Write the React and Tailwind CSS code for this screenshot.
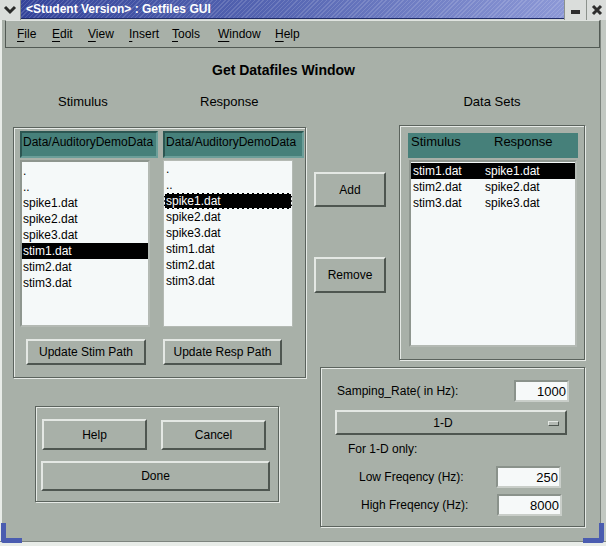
import React from "react";

function Btn({ className = "", children }) {
  return (
    <div
      className={
        "flex items-center justify-center border-2 border-t-[#e4e8e4] border-l-[#e4e8e4] border-b-[#4e5650] border-r-[#4e5650] bg-[#a8b0a8] text-[12px] text-black " +
        className
      }
    >
      {children}
    </div>
  );
}

function Frame({ className = "", children }) {
  return (
    <div
      className={
        "border border-[#5b635d] shadow-[1px_1px_0_#e6eae6,inset_1px_1px_0_#e6eae6] " +
        className
      }
    >
      {children}
    </div>
  );
}

function Input({ className = "", value }) {
  return (
    <div
      className={
        "flex items-center justify-end bg-[#f6f9f9] border-2 border-t-[#8a928b] border-l-[#8a928b] border-b-[#c9cec9] border-r-[#c9cec9] pr-[1px] text-[13px] leading-none " +
        className
      }
    >
      {value}
    </div>
  );
}

function Header({ className = "", children }) {
  return (
    <div
      className={
        "bg-[#46807a] border-2 border-t-[#2c5652] border-l-[#2c5652] border-b-[#6b9e99] border-r-[#6b9e99] text-[12px] text-black leading-[16px] " +
        className
      }
    >
      {children}
    </div>
  );
}

const stimItems = [".", "..", "spike1.dat", "spike2.dat", "spike3.dat", "stim1.dat", "stim2.dat", "stim3.dat"];
const respItems = [".", "..", "spike1.dat", "spike2.dat", "spike3.dat", "stim1.dat", "stim2.dat", "stim3.dat"];

const menus = [
  ["F", "ile", "w-[35px]"],
  ["E", "dit", "w-[36px]"],
  ["V", "iew", "w-[41px]"],
  ["I", "nsert", "w-[43px]"],
  ["T", "ools", "w-[46px]"],
  ["W", "indow", "w-[57px]"],
  ["H", "elp", "w-[40px]"],
];

export default function App() {
  return (
    <div className="relative w-[606px] h-[546px] overflow-hidden bg-[#a8b0a8] font-['Liberation_Sans',Arial,sans-serif] text-black">
      {/* Title bar */}
      <div className="flex h-[20px] bg-[#d4d8d4]">
        <div className="w-[21px] h-[20px] flex items-center justify-center bg-[#dadddb] border-r border-[#8c928d]">
          <svg width="14" height="10" viewBox="0 0 14 10">
            <polyline points="2,2 7,7 12,2" fill="none" stroke="#2a2a2a" strokeWidth="3" />
          </svg>
        </div>
        <div className="flex-1 h-[19px] flex items-center pl-[5px] text-white font-bold text-[12px] leading-none border-b border-[#1e2a66] bg-[image:repeating-linear-gradient(135deg,rgba(255,255,255,0.14)_0px,rgba(255,255,255,0.14)_1px,transparent_1px,transparent_3px),linear-gradient(90deg,#34449a,#5868b4_50%,#8c98d6)]">
          &lt;Student Version&gt; : Getfiles GUI
        </div>
        <div className="w-[22px] h-[20px] flex items-center justify-center bg-[#dadddb] border-l border-[#8c928d]">
          <div className="w-[9px] h-[4px] bg-[#2e2e2e] mt-[4px]" />
        </div>
        <div className="w-[20px] h-[20px] flex items-center justify-center bg-[#dadddb] border-l border-[#8c928d]">
          <svg width="12" height="12" viewBox="0 0 12 12">
            <path d="M2 2 L10 10 M10 2 L2 10" stroke="#2e2e2e" strokeWidth="3" />
          </svg>
        </div>
      </div>

      {/* Menu bar */}
      <div className="ml-[5px] mr-[6px] h-[28px] flex items-center border-l border-r border-b border-[#525a54] border-t border-t-[#dfe3df] pl-[11px] text-[12px]">
        {menus.map(([a, b, w]) => (
          <div key={a + b} className={w}>
            <span className="underline underline-offset-[3px] decoration-1">{a}</span>
            {b}
          </div>
        ))}
      </div>

      {/* Content */}
      <div className="pt-[14px]">
        <div className="ml-[212px] h-[16px] leading-[16px] text-[14px] font-bold">Get Datafiles Window</div>
        <div className="flex items-start">
          {/* Left column */}
          <div className="ml-[13px] w-[293px]">
            <div className="flex h-[16px] mt-[16px] text-[13px] leading-[16px]">
              <span className="ml-[45px] w-[142px]">Stimulus</span>
              <span>Response</span>
            </div>
            <Frame className="mt-[17px] h-[251px]">
              <div className="flex pl-[6px] pt-[3px] gap-[5px]">
                {/* Stimulus column */}
                <div className="flex flex-col">
                  <Header className="w-[138px] h-[27px] pl-[1px] pt-[1px] whitespace-nowrap overflow-hidden">Data/AuditoryDemoData</Header>
                  <div className="mt-[2px] w-[130px] h-[167px] bg-[#f5f9f9] border-2 border-[#8e968f] border-b-[#b4bab4] border-r-[#b4bab4] pt-[1px] text-[12px]">
                    {stimItems.map((it, i) => (
                      <div
                        key={i}
                        className={
                          i === 5
                            ? "h-[16px] leading-[16px] pl-[1px] bg-black text-white"
                            : "h-[16px] leading-[16px] pl-[1px]"
                        }
                      >
                        {it}
                      </div>
                    ))}
                  </div>
                  <Btn className="ml-[6px] mt-[12px] w-[120px] h-[26px]">Update Stim Path</Btn>
                </div>
                {/* Response column */}
                <div className="flex flex-col">
                  <Header className="w-[141px] h-[27px] pl-[1px] pt-[1px] whitespace-nowrap overflow-hidden">Data/AuditoryDemoData</Header>
                  <div className="mt-[2px] w-[130px] h-[167px] bg-[#f5f9f9] border border-[#b4bab4] text-[12px]">
                    {respItems.map((it, i) => (
                      <div
                        key={i}
                        className={
                          i === 2
                            ? "h-[16px] leading-[14px] pl-[1px] bg-black text-white border border-dashed border-[#f5f9f9]"
                            : "h-[16px] leading-[16px] pl-[2px]"
                        }
                      >
                        {it}
                      </div>
                    ))}
                  </div>
                  <Btn className="mt-[12px] w-[119px] h-[26px]">Update Resp Path</Btn>
                </div>
              </div>
            </Frame>
            <Frame className="mt-[28px] ml-[22px] w-[244px] h-[96px]">
              <div className="flex items-start pt-[12px]">
                <Btn className="ml-[6px] w-[105px] h-[31px]">Help</Btn>
                <Btn className="ml-[14px] mt-[1px] w-[105px] h-[30px]">Cancel</Btn>
              </div>
              <Btn className="ml-[5px] mt-[11px] w-[229px] h-[30px]">Done</Btn>
            </Frame>
          </div>

          {/* Right column */}
          <div className="ml-[8px]">
            <div className="flex items-start">
              <div className="w-[72px] flex flex-col">
                <Btn className="mt-[94px] h-[35px]">Add</Btn>
                <Btn className="mt-[50px] h-[36px]">Remove</Btn>
              </div>
              <div className="ml-[13px] w-[186px]">
                <div className="mt-[16px] h-[16px] leading-[16px] text-[13px] text-center">Data Sets</div>
                <Frame className="mt-[15px] h-[235px]">
                  <div className="ml-[8px] mt-[7px] w-[170px] h-[25px] flex bg-[#46807a] text-[13px] leading-[16px] pt-[1px]">
                    <span className="pl-[3px] w-[86px] shrink-0">Stimulus</span>
                    <span>Response</span>
                  </div>
                  <div className="ml-[9px] mt-[2px] w-[168px] h-[187px] bg-[#f5f9f9] border-2 border-[#8e968f] border-b-[#b4bab4] border-r-[#b4bab4] pt-[1px] text-[12px]">
                    {[
                      ["stim1.dat", "spike1.dat"],
                      ["stim2.dat", "spike2.dat"],
                      ["stim3.dat", "spike3.dat"],
                    ].map(([a, b], i) => (
                      <div
                        key={i}
                        className={
                          i === 0
                            ? "flex h-[16px] leading-[16px] bg-black text-white"
                            : "flex h-[16px] leading-[16px]"
                        }
                      >
                        <span className="pl-[2px] w-[74px] shrink-0">{a}</span>
                        <span>{b}</span>
                      </div>
                    ))}
                  </div>
                </Frame>
              </div>
            </div>
            <Frame className="ml-[6px] mt-[7px] w-[265px] h-[160px] text-[12px]">
              <div className="flex items-center mt-[12px] h-[22px]">
                <span className="ml-[16px]">Samping_Rate( in Hz):</span>
                <Input className="ml-auto mr-[15px] w-[55px] h-[22px]" value="1000" />
              </div>
              <div className="relative ml-[14px] mt-[8px] w-[232px] h-[25px] flex items-center justify-center pr-[16px] border-2 border-t-[#e4e8e4] border-l-[#e4e8e4] border-b-[#4e5650] border-r-[#4e5650]">
                1-D
                <div className="absolute right-[6px] top-[9px] w-[11px] h-[5px] bg-[#b4bab4] border border-t-[#e4e8e4] border-l-[#e4e8e4] border-b-[#4e5650] border-r-[#4e5650]" />
              </div>
              <div className="ml-[27px] mt-[6px] h-[16px] leading-[16px]">For 1-D only:</div>
              <div className="flex items-center mt-[9px] h-[22px]">
                <span className="ml-[38px]">Low Freqency (Hz):</span>
                <Input className="ml-auto mr-[23px] w-[65px] h-[22px]" value="250" />
              </div>
              <div className="flex items-center mt-[6px] h-[22px]">
                <span className="ml-[40px]">High Freqency (Hz):</span>
                <Input className="ml-auto mr-[22px] w-[65px] h-[22px]" value="8000" />
              </div>
            </Frame>
          </div>
        </div>
      </div>

      {/* Window frame decorations */}
      <div className="absolute left-0 top-[20px] w-[2px] h-[526px] bg-[#e8ece8]" />
      <div className="absolute right-0 top-[20px] w-[6px] h-[526px] bg-[#c2c8c2] border-l border-[#7d847e]" />
      <div className="absolute left-0 bottom-0 w-[606px] h-[5px] bg-[#e8ece8] border-t border-[#7d847e]" />
      <div className="absolute left-[1px] top-[523px] w-[5px] h-[20px] bg-[#4a5cb0] rounded-bl-[3px]" />
      <div className="absolute left-[1px] top-[538px] w-[21px] h-[5px] bg-[#4a5cb0] rounded-bl-[3px]" />
      <div className="absolute left-[599px] top-[523px] w-[5px] h-[20px] bg-[#4a5cb0] rounded-br-[3px]" />
      <div className="absolute left-[583px] top-[538px] w-[21px] h-[5px] bg-[#4a5cb0] rounded-br-[3px]" />
    </div>
  );
}
